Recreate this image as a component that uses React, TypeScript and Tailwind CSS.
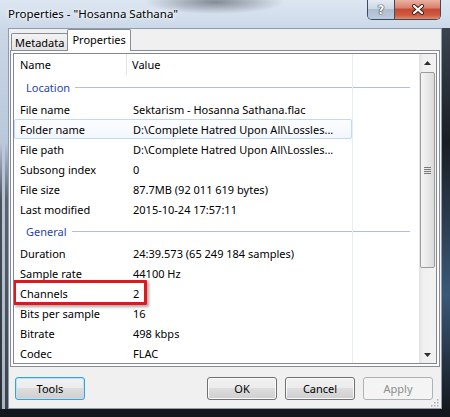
import React from "react";

type Item = [string, string];

const locationItems: Item[] = [
  ["File name", "Sektarism - Hosanna Sathana.flac"],
  ["Folder name", "D:\\Complete Hatred Upon All\\Lossles..."],
  ["File path", "D:\\Complete Hatred Upon All\\Lossles..."],
  ["Subsong index", "0"],
  ["File size", "87.7MB (92 011 619 bytes)"],
  ["Last modified", "2015-10-24 17:57:11"],
];

const generalItems: Item[] = [
  ["Duration", "24:39.573 (65 249 184 samples)"],
  ["Sample rate", "44100 Hz"],
  ["Channels", "2"],
  ["Bits per sample", "16"],
  ["Bitrate", "498 kbps"],
  ["Codec", "FLAC"],
];

function Row({ name, value, hot }: { name: string; value: string; hot?: boolean }) {
  return (
    <div
      className={
        hot
          ? "h-[20px] w-[338px] flex items-center rounded-[2px] border border-[#c3d9f3] bg-[linear-gradient(to_bottom,#fcfdff,#f2f7fe)]"
          : "h-[20px] w-[338px] flex items-center rounded-[2px] border border-transparent"
      }
    >
      <div className="w-[113px] pl-[5px] whitespace-nowrap">{name}</div>
      <div className="flex-1 pl-[5px] whitespace-nowrap">{value}</div>
    </div>
  );
}

function Group({ title }: { title: string }) {
  return (
    <div className="h-[24px] flex items-center pl-[12px] pr-[9px]">
      <span className="text-[#2a44b0] whitespace-nowrap">{title}</span>
      <div className="flex-1 h-px bg-[#b3c0dc] ml-[5px]" />
    </div>
  );
}

function Btn({ label, focus, disabled }: { label: string; focus?: boolean; disabled?: boolean }) {
  let cls =
    "w-[70px] h-[23px] rounded-[3px] border flex items-center justify-center ";
  if (disabled) {
    cls += "border-[#adb2b5] bg-[#f4f4f4] text-[#8d8d8d]";
  } else if (focus) {
    cls +=
      "border-[#3c9fd8] bg-[linear-gradient(to_bottom,#f2f2f2_0%,#ebebeb_50%,#dddddd_50%,#cfcfcf_100%)] shadow-[inset_0_0_0_1px_#b5e3f8] text-black";
  } else {
    cls +=
      "border-[#707070] bg-[linear-gradient(to_bottom,#f2f2f2_0%,#ebebeb_50%,#dddddd_50%,#cfcfcf_100%)] shadow-[inset_0_0_0_1px_#fbfbfb] text-black";
  }
  return (
    <button type="button" className={cls}>
      {label}
    </button>
  );
}

export default function App() {
  return (
    <div className="w-[450px] h-[417px] overflow-hidden flex flex-col bg-[#121519] font-['Noto_Sans',sans-serif] text-[11px] text-black leading-none">
      {/* Title bar */}
      <div className="h-[28px] flex items-start pr-[9px] bg-[radial-gradient(ellipse_70px_12px_at_215px_2px,rgba(40,48,58,0.5),transparent),linear-gradient(to_bottom,#dde7f2,#cbd9e8)]">
        <div className="flex-1 h-[28px] flex items-center pl-[8px] text-[11.5px] text-black [text-shadow:0_0_6px_#ffffff,0_0_3px_#ffffff]">
          Properties - "Hosanna Sathana"
        </div>
        <div className="flex h-[20px] rounded-b-[5px] border border-t-0 border-[#3d4b5e] overflow-hidden">
          <div className="w-[27px] border-r border-[#3d4b5e] bg-[linear-gradient(to_bottom,#e4ebf3_0%,#ccd8e5_45%,#aebed0_50%,#bccbdb_100%)] flex items-center justify-center">
            <span className="font-['DejaVu_Sans',sans-serif] font-bold text-[12px] text-white [text-shadow:0_0_1px_#2c3440,0_0_1px_#2c3440,0_0_1px_#2c3440]">
              ?
            </span>
          </div>
          <div className="w-[45px] bg-[linear-gradient(to_bottom,#eab1a2_0%,#d9836f_40%,#c54a33_50%,#cf5a3f_80%,#e28a6d_100%)] flex items-center justify-center">
            <svg width="14" height="11" viewBox="0 0 14 11">
              <path d="M3 2 L11 9 M11 2 L3 9" stroke="#3b1e18" strokeWidth="4" strokeLinecap="round" />
              <path d="M3 2 L11 9 M11 2 L3 9" stroke="#ffffff" strokeWidth="2.2" strokeLinecap="round" />
            </svg>
          </div>
        </div>
      </div>

      <div className="flex flex-1">
        {/* left frame */}
        <div className="w-[8px] flex">
          <div className="w-[2px] bg-[linear-gradient(to_bottom,#c9d7e6_0%,#b9c8da_30%,#4b535d_45%,#2a2f36_100%)]" />
          <div className="w-[3px] bg-[linear-gradient(to_bottom,#c9d7e6_0%,#b9c8da_30%,#a9b6c4_100%)]" />
          <div className="w-[3px] bg-[linear-gradient(to_bottom,#c9d7e6_0%,#b9c8da_30%,#5a6470_45%,#3a414a_100%)]" />
        </div>

        {/* client */}
        <div className="w-[434px] relative flex flex-col border border-[#8e9cad] bg-[#f0f0f0]">
          {/* tabs */}
          <div className="relative z-10 h-[21px] flex items-end px-[1px]">
            <div className="h-[17px] ml-[1px] px-[3px] flex items-center border border-b-0 border-[#898c95] rounded-t-[2px] bg-[linear-gradient(to_bottom,#f3f3f3,#e3e3e3)]">
              Metadata
            </div>
            <div className="h-[22px] -mb-[1px] -ml-[1px] px-[4px] pb-[3px] flex items-center border border-b-0 border-[#898c95] rounded-t-[2px] bg-[#ffffff]">
              Properties
            </div>
          </div>

          {/* tab panel */}
          <div className="mx-[1px] h-[317px] border border-[#898c95] bg-[#fcfcfc] p-[2px]">
            {/* list view */}
            <div className="h-[311px] border border-[#828790] bg-white flex">
              <div className="flex-1 relative overflow-hidden">
                {/* column grid line */}
                <div className="absolute left-[338px] top-0 bottom-0 w-px bg-[#e8edf3]" />
                {/* header */}
                <div className="h-[21px] flex items-center relative">
                  <div className="w-[113px] pl-[6px] h-full flex items-center border-r border-[#e3e3e3]">Name</div>
                  <div className="w-[225px] pl-[5px] h-full flex items-center">Value</div>
                </div>
                <Group title="Location" />
                {locationItems.map(([n, v], i) => (
                  <Row key={n} name={n} value={v} hot={i === 1} />
                ))}
                <Group title="General" />
                {generalItems.map(([n, v]) => (
                  <Row key={n} name={n} value={v} />
                ))}
                {/* red annotation box */}
                <div className="absolute left-[-1px] top-[226px] w-[134px] h-[25px] border-[3px] border-[#e4161d] rounded-[1px] shadow-[2px_2px_3px_rgba(0,0,0,0.35)]" />
              </div>
              {/* scrollbar */}
              <div className="w-[17px] flex flex-col bg-[linear-gradient(to_right,#e2e2e2,#f0f0f0_25%,#f2f2f2)]">
                <div className="h-[17px] flex items-center justify-center">
                  <svg width="7" height="4" viewBox="0 0 7 4">
                    <path d="M3.5 0 L7 4 L0 4 Z" fill="#2e2e2e" />
                  </svg>
                </div>
                <div className="h-[196px] mt-[1px] mx-[1px] rounded-[2px] border border-[#9c9c9c] bg-[linear-gradient(to_right,#f5f5f5,#e9e9e9_50%,#dadada)] flex items-center justify-center">
                  <div className="flex flex-col gap-[1px]">
                    <div className="w-[7px] h-px bg-[#7a7a7a]" />
                    <div className="w-[7px] h-px bg-[#7a7a7a]" />
                    <div className="w-[7px] h-px bg-[#7a7a7a]" />
                    <div className="w-[7px] h-px bg-[#7a7a7a]" />
                  </div>
                </div>
                <div className="flex-1" />
                <div className="h-[17px] flex items-center justify-center">
                  <svg width="7" height="4" viewBox="0 0 7 4">
                    <path d="M0 0 L7 0 L3.5 4 Z" fill="#2e2e2e" />
                  </svg>
                </div>
              </div>
            </div>
          </div>

          {/* buttons */}
          <div className="mt-[10px] flex items-center pl-[6px] pr-[8px]">
            <Btn label="Tools" focus />
            <div className="flex-1" />
            <div className="flex gap-[8px]">
              <Btn label="OK" />
              <Btn label="Cancel" />
              <Btn label="Apply" disabled />
            </div>
          </div>

          {/* size grip */}
          <div className="absolute right-[2px] bottom-[1px]">
            <svg width="8" height="8" viewBox="0 0 8 8">
              <rect x="6" y="0" width="1.5" height="1.5" fill="#b0b0b0" />
              <rect x="3" y="3" width="1.5" height="1.5" fill="#b0b0b0" />
              <rect x="6" y="3" width="1.5" height="1.5" fill="#b0b0b0" />
              <rect x="0" y="6" width="1.5" height="1.5" fill="#b0b0b0" />
              <rect x="3" y="6" width="1.5" height="1.5" fill="#b0b0b0" />
              <rect x="6" y="6" width="1.5" height="1.5" fill="#b0b0b0" />
            </svg>
          </div>
        </div>

        {/* right frame */}
        <div className="w-[8px] bg-[linear-gradient(to_bottom,#3b4350_0%,#1a1e24_30%,#3a5878_70%,#15191e_100%)]" />
      </div>

      {/* bottom frame */}
      <div className="h-[8px] bg-[#14171b]" />
    </div>
  );
}
